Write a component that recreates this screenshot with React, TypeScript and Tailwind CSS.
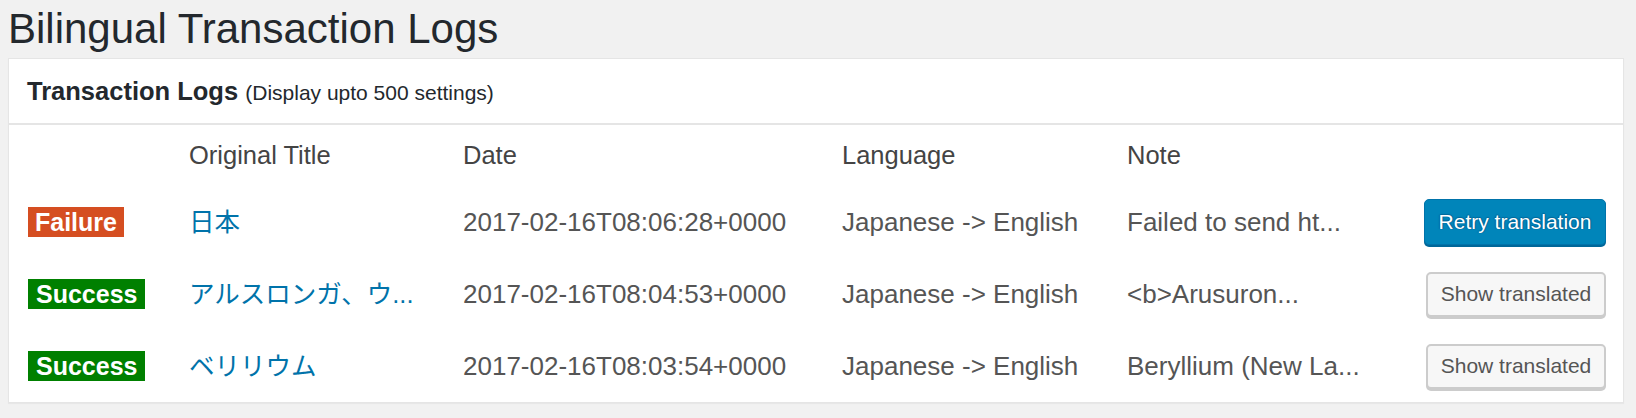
const rows = [
  {
    status: "Failure",
    title: "日本",
    date: "2017-02-16T08:06:28+0000",
    language: "Japanese -> English",
    note: "Failed to send ht...",
    action: "retry",
  },
  {
    status: "Success",
    title: "アルスロンガ、ウ...",
    date: "2017-02-16T08:04:53+0000",
    language: "Japanese -> English",
    note: "<b>Arusuron...",
    action: "show",
  },
  {
    status: "Success",
    title: "ベリリウム",
    date: "2017-02-16T08:03:54+0000",
    language: "Japanese -> English",
    note: "Beryllium (New La...",
    action: "show",
  },
];

const gridCols =
  "grid grid-cols-[161px_274px_379px_285px_1fr_auto] items-center pl-[19px] pr-[17px]";

export default function App() {
  return (
    <div className="min-h-[418px] bg-[#f1f1f1] pl-2 pr-3 font-['Liberation_Sans','Noto_Sans_CJK_JP',sans-serif]">
      {/* Page title */}
      <h1 className="pt-2 mb-2 text-[42px] leading-[42px] font-normal text-[#23282d]">
        Bilingual Transaction Logs
      </h1>

      {/* Card */}
      <div className="bg-white border border-[#e5e5e5] shadow-[0_1px_1px_rgba(0,0,0,0.04)]">
        {/* Card header */}
        <div className="h-[66px] border-b-2 border-[#e5e5e5] pl-[18px] pt-[19px] text-[25.5px] leading-[26px] text-[#23282d]">
          <span className="font-bold">Transaction Logs</span>{" "}
          <span className="text-[21px]">(Display upto 500 settings)</span>
        </div>

        {/* Column headings */}
        <div className={`${gridCols} h-[61px] text-[25.5px] text-[#444]`}>
          <span />
          <span>Original Title</span>
          <span>Date</span>
          <span>Language</span>
          <span>Note</span>
          <span />
        </div>

        {/* Rows */}
        {rows.map((row, i) => (
          <div key={i} className={`${gridCols} h-[72px] text-[26px] text-[#555]`}>
            <div>
              {row.status === "Failure" ? (
                <span className="inline-block h-[30px] px-[7px] bg-[#d54e21] text-white text-[25px] font-bold leading-[30px]">
                  Failure
                </span>
              ) : (
                <span className="inline-block h-[30px] px-[8px] bg-[#008000] text-white text-[25px] font-bold leading-[30px]">
                  Success
                </span>
              )}
            </div>
            <a className="text-[25.5px] text-[#0073aa]">{row.title}</a>
            <span>{row.date}</span>
            <span>{row.language}</span>
            <span>{row.note}</span>
            {row.action === "retry" ? (
              <button className="w-[182px] h-[46px] -mt-[1px] rounded-[5px] border border-[#0073aa] bg-[#0085ba] text-white text-[21px] shadow-[0_2px_0_#006799] [text-shadow:0_-1px_1px_#006799,1px_0_1px_#006799,-1px_0_1px_#006799]">
                Retry translation
              </button>
            ) : (
              <button className="w-[180px] h-[45px] rounded-[5px] border-2 border-[#cccccc] bg-[#f7f7f7] text-[#555] text-[21px] shadow-[0_2px_0_#cccccc]">
                Show translated
              </button>
            )}
          </div>
        ))}
      </div>
    </div>
  );
}
